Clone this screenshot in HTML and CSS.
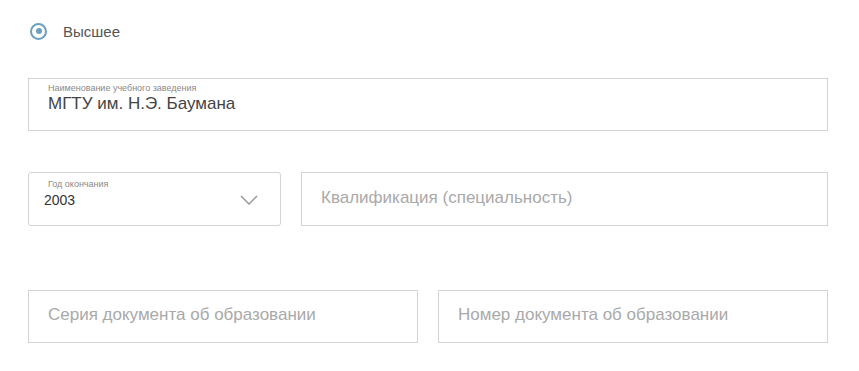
FILE: index.html
```html
<!DOCTYPE html>
<html>
<head lang="ru">
  <meta charset="UTF-8">
  <title>Образование</title>
  <link rel="stylesheet" href="styles.css">
</head>
<body>
  <div class="form">
    <label class="radio">
      <span class="radioMark"></span>
      <span class="radioText">Высшее</span>
    </label>

    <div class="field fieldFilled fieldWide">
      <div class="fieldLabel">Наименование учебного заведения</div>
      <div class="fieldValue">МГТУ им. Н.Э. Баумана</div>
    </div>

    <div class="row rowYear">
      <div class="field fieldSelect">
        <div class="selectInner">
          <div class="fieldLabel">Год окончания</div>
          <div class="selectValue">2003</div>
        </div>
        <svg class="chevron" width="18" height="10" viewBox="0 0 18 10">
          <path d="M1 1 L9 9 L17 1" fill="none" stroke="#9a9a9a" stroke-width="1.5"/>
        </svg>
      </div>
      <div class="field fieldEmpty fieldGrow">Квалификация (специальность)</div>
    </div>

    <div class="row rowDoc">
      <div class="field fieldEmpty fieldHalf">Серия документа об образовании</div>
      <div class="field fieldEmpty fieldHalf">Номер документа об образовании</div>
    </div>
  </div>
</body>
</html>
```

FILE: styles.css
```css
body {
  margin: 0;
  background: #fff;
  font-family: "Liberation Sans", Arial, sans-serif;
  color: #444;
}
.form {
  width: 800px;
  padding: 21px 0 0 28px;
}
.radio {
  display: flex;
  align-items: center;
  height: 20px;
  padding-left: 2px;
}
.radioMark {
  box-sizing: border-box;
  width: 17px;
  height: 17px;
  border: 2.5px solid #6d9fc1;
  border-radius: 50%;
  display: flex;
  align-items: center;
  justify-content: center;
}
.radioMark::after {
  content: "";
  width: 6px;
  height: 6px;
  border-radius: 50%;
  background: #6d9fc1;
}
.radioText {
  margin-left: 16px;
  font-size: 15px;
  color: #555;
}
.field {
  box-sizing: border-box;
  border: 1px solid #d4d4d4;
  background: #fff;
}
.fieldWide {
  margin-top: 37px;
  height: 53px;
  padding: 4px 19px 0;
}
.fieldLabel {
  font-size: 9px;
  color: #8a8a8a;
  line-height: 11px;
}
.fieldValue {
  font-size: 17px;
  color: #444;
  line-height: 20px;
}
.row {
  display: flex;
  gap: 20px;
}
.rowYear {
  margin-top: 41px;
}
.rowDoc {
  margin-top: 64px;
}
.fieldSelect {
  width: 253px;
  height: 54px;
  border-radius: 3px;
  display: flex;
  align-items: center;
  justify-content: space-between;
  padding: 0 22px 0 15px;
}
.selectInner {
  padding-bottom: 10px;
}
.selectInner .fieldLabel {
  padding-left: 4px;
  line-height: 12px;
}
.selectValue {
  font-size: 14px;
  color: #333;
  line-height: 20px;
}
.chevron {
  display: block;
  margin-top: 2px;
}
.fieldEmpty {
  height: 54px;
  display: flex;
  align-items: center;
  padding: 0 19px 3px;
  font-size: 17px;
  color: #a9a9a9;
}
.fieldGrow {
  flex: 1;
}
.fieldHalf {
  width: 390px;
  height: 53px;
}
```
